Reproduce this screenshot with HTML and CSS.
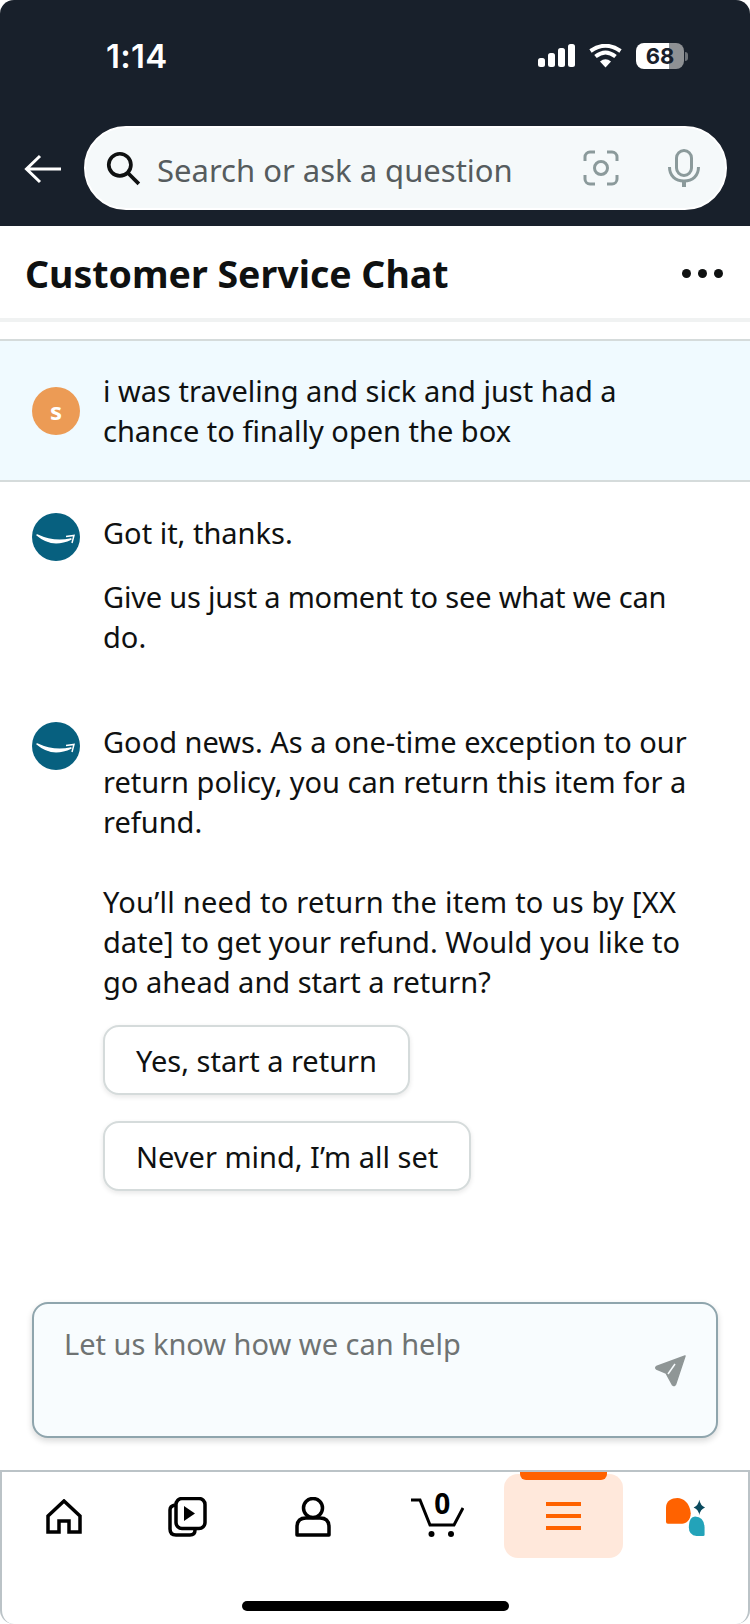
FILE: index.html
```html
<!DOCTYPE html>
<html lang="en">
<head>
<meta charset="utf-8">
<title>Customer Service Chat</title>
<link rel="stylesheet" href="styles.css">
</head>
<body>
<div class="screen">
  <header class="top">
    <div class="status">
      <span class="time">1:14</span>
      <div class="status-icons">
        <svg class="signal" width="37" height="24" viewBox="0 0 37 24"><rect x="0" y="14" width="7" height="9" rx="2.5"/><rect x="10" y="9" width="7" height="14" rx="2.5"/><rect x="20" y="4" width="7" height="19" rx="2.5"/><rect x="30" y="0" width="7" height="23" rx="2.5"/></svg>
        <svg class="wifi" width="33" height="24" viewBox="0 0 33 24"><path d="M16.5 23.5 L11 17.5 Q16.5 13 22 17.5Z" fill="#fff"/><path d="M6.5 12.5 Q16.5 4.5 26.500 12.500" fill="none" stroke="#fff" stroke-width="4"/><path d="M1.500 7 Q16.500 -3.500 31.500 7" fill="none" stroke="#fff" stroke-width="4"/></svg>
        <div class="battery"><div class="battery-body"><span class="battery-num">68</span></div><span class="battery-cap"></span></div>
      </div>
    </div>
    <div class="searchrow">
      <svg class="back" width="38" height="30" viewBox="0 0 38 30"><path d="M37 15H3M16 2 2.500 15 16 28" fill="none" stroke="#fff" stroke-width="3"/></svg>
      <div class="search">
        <svg class="mag" width="38" height="38" viewBox="0 0 36 36"><circle cx="15" cy="15" r="10.500" fill="none" stroke="#0f1111" stroke-width="3.500"/><path d="M22 22 33 33" stroke="#0f1111" stroke-width="3.500"/></svg>
        <span class="search-text">Search or ask a question</span>
        <svg class="lens" width="36" height="36" viewBox="0 0 36 36"><path d="M2 11V7a5 5 0 0 1 5-5h5M24 2h5a5 5 0 0 1 5 5v4M34 25v4a5 5 0 0 1-5 5h-5M12 34H7a5 5 0 0 1-5-5v-4" fill="none" stroke="#8b9a9b" stroke-width="3"/><circle cx="18" cy="18" r="6.500" fill="none" stroke="#8b9a9b" stroke-width="3"/></svg>
        <svg class="mic" width="32" height="38" viewBox="0 0 32 38"><rect x="8.500" y="1.500" width="15" height="25" rx="7.500" fill="none" stroke="#8b9a9b" stroke-width="3"/><path d="M1.500 18c0 9 6 14 14.500 14s14.500-5 14.500-14" fill="none" stroke="#8b9a9b" stroke-width="3"/><path d="M16 31v7" stroke="#8b9a9b" stroke-width="4"/></svg>
      </div>
    </div>
  </header>

  <div class="titlebar">
    <h1 class="title">Customer Service Chat</h1>
    <div class="more"><i></i><i></i><i></i></div>
  </div>

  <section class="msg-user">
    <div class="avatar avatar-s">S</div>
    <p class="text">i was traveling and sick and just had a<br>chance to finally open the box</p>
  </section>

  <section class="msg msg-first">
    <div class="avatar avatar-a"><svg width="48" height="48" viewBox="0 0 48 48"><path d="M5 22Q20 35 39 26Q22 30 5 22Z" fill="#fff" stroke="#fff" stroke-width="1.500" stroke-linejoin="round"/><path d="M34 23.500 42 22.500 40 30" fill="none" stroke="#fff" stroke-width="1.500"/></svg></div>
    <div class="body">
      <p class="text">Got it, thanks.</p>
      <p class="text gap"><span class="tight">Give us just a moment to see what we can</span><br>do.</p>
    </div>
  </section>

  <section class="msg msg-second">
    <div class="avatar avatar-a"><svg width="48" height="48" viewBox="0 0 48 48"><path d="M5 22Q20 35 39 26Q22 30 5 22Z" fill="#fff" stroke="#fff" stroke-width="1.500" stroke-linejoin="round"/><path d="M34 23.500 42 22.500 40 30" fill="none" stroke="#fff" stroke-width="1.500"/></svg></div>
    <div class="body">
      <p class="text">Good news. As a one-time exception to our<br>return policy, you can return this item for a<br>refund.</p>
      <p class="text para"><span class="loose">You’ll need to return the item to us by [XX</span><br>date] to get your refund. Would you like to<br>go ahead and start a return?</p>
      <div class="choices">
        <button class="choice">Yes, start a return</button>
        <button class="choice">Never mind, I’m all set</button>
      </div>
    </div>
  </section>

  <div class="spacer"></div>

  <div class="composer">
    <span class="placeholder">Let us know how we can help</span>
    <svg class="send" width="32" height="32" viewBox="0 0 32 32"><path d="M30 1 1.500 11.500 Q0 12.500 1.500 14 L11 18 L17.500 30 Q19.500 31.500 20.500 29.500 Z" fill="#8f9696" stroke="#8f9696" stroke-width="1.500" stroke-linejoin="round"/><path d="M20 9 13 19" stroke="#f8fcfe" stroke-width="1.500"/></svg>
  </div>

  <nav class="nav">
    <div class="tabs">
      <div class="tab">
        <svg class="icon-low" width="36" height="36" viewBox="0 0 36 36"><path d="M2 33V17L18 2 34 17V33H23V22H13V33Z" fill="none" stroke="#000" stroke-width="3.500"/></svg>
      </div>
      <div class="tab">
        <svg width="40" height="40" viewBox="0 0 40 40"><path d="M7 8Q2 9 2 13V32Q2 38 8 38H22Q27 38 27 33" fill="none" stroke="#000" stroke-width="3.500"/><rect x="8" y="1.500" width="29" height="30" rx="6" fill="#fff" stroke="#000" stroke-width="3.500"/><path d="M16 9 27 16.500 16 24Z" fill="#000"/></svg>
      </div>
      <div class="tab">
        <svg width="36" height="40" viewBox="0 0 36 40"><ellipse cx="18" cy="11" rx="9.500" ry="9.500" fill="none" stroke="#000" stroke-width="3.500"/><path d="M2 38V30Q2 21 11 21H25Q34 21 34 30V38Z" fill="none" stroke="#000" stroke-width="3.500" stroke-linejoin="round"/></svg>
      </div>
      <div class="tab tab-cart">
        <svg width="54" height="43" viewBox="0 0 54 43"><path d="M1 3H10L20 28H44L53 11" fill="none" stroke="#000" stroke-width="3"/><circle cx="21.500" cy="37" r="3"/><circle cx="41" cy="37" r="3"/></svg>
        <span class="cart-count">0</span>
      </div>
      <div class="tab tab-active">
        <span class="active-bar"></span>
        <div class="burger"><i></i><i></i><i></i></div>
      </div>
      <div class="tab">
        <svg width="44" height="40" viewBox="0 0 44 42"><path d="M1 11C1 4 7 1 13 1S26 6 27 17C27 24 22 28 18 28H3Q1 28 1 26Z" fill="#ff6200"/><path d="M25 32Q25 21 31.500 20.500 Q41 21 41.500 32V40Q41.500 41 40 41H33Q25 40 25 32Z" fill="#23a3b9"/><path d="M36 3Q37 9 42 11 37 13 36 19 35 13 30 11 35 9 36 3Z" fill="#0a4a5e"/></svg>
      </div>
    </div>
    <div class="home-row"><span class="home-indicator"></span></div>
  </nav>
</div>
</body>
</html>
```

FILE: styles.css
```css
* { box-sizing: border-box; }
html, body { margin: 0; padding: 0; background: #fff; }
body { font-family: "Noto Sans", "Liberation Sans", sans-serif; color: #0f1111; }
.screen { width: 750px; height: 1624px; display: flex; flex-direction: column; overflow: hidden; }

.top { height: 226px; background: #18202b; border-radius: 14px 14px 0 0; flex: none; }
.status { height: 126px; padding: 40px 62px 0 106px; display: flex; justify-content: space-between; align-items: flex-start; }
.time { color: #fff; font-size: 33px; line-height: 32px; font-weight: 600; font-family: "Inter", "Noto Sans", sans-serif; letter-spacing: 0.3px; }
.status-icons { display: flex; align-items: center; gap: 14px; padding-top: 3px; }
.signal { fill: #fff; }
.battery { display: flex; align-items: center; }
.battery-body { width: 48px; height: 26px; border-radius: 8px; background: linear-gradient(90deg, #fff 0 69%, #8e9194 69% 100%); display: flex; align-items: center; justify-content: center; }
.battery-num { color: #18202b; font-size: 22px; font-weight: 700; line-height: 26px; font-family: "Inter", sans-serif; }
.battery-cap { width: 3px; height: 9px; background: #6d7278; border-radius: 0 3px 3px 0; margin-left: 1px; }

.searchrow { display: flex; align-items: center; padding-left: 24px; padding-right: 23px; gap: 22px; }
.back { flex: none; margin-top: 2px; }
.search { flex: 1; height: 84px; border-radius: 42px; background: #f5f9fa; border: 2px solid #fff; display: flex; align-items: center; padding: 0 25px 0 18px; }
.mag { flex: none; margin-right: 15px; }
.search-text { flex: 1; font-size: 31px; line-height: 40px; color: #565c5e; white-space: nowrap; padding-top: 4px; }
.lens { margin-right: 49px; flex: none; }
.mic { flex: none; }

.titlebar { height: 96px; display: flex; align-items: center; justify-content: space-between; padding: 5px 27px 1px 25px; border-bottom: 4px solid #f0f2f2; flex: none; }
.title { margin: 0; font-size: 37.500px; line-height: 44px; font-weight: 700; color: #0f1111; white-space: nowrap; }
.more { display: flex; gap: 7px; padding-bottom: 2px; }
.more i { width: 9px; height: 9px; border-radius: 50%; background: #0f1111; display: block; }

.msg-user { margin-top: 17px; height: 143px; flex: none; display: flex; align-items: center; gap: 23px; padding-left: 32px; background: #f0faff; border-top: 2px solid #d5dbdb; border-bottom: 2px solid #d5dbdb; }
.avatar { width: 48px; height: 48px; border-radius: 50%; flex: none; display: flex; align-items: center; justify-content: center; }
.avatar-s { background: #ec9b55; color: #fff; font-size: 24px; font-weight: 700; text-transform: lowercase; }
.avatar-a { background: #07607f; overflow: hidden; }
.text { margin: 0; font-size: 29px; line-height: 40px; color: #0f1111; white-space: nowrap; }
.tight { letter-spacing: -0.2px; }
.loose { letter-spacing: 0.25px; }

.msg { display: flex; gap: 23px; padding-left: 32px; flex: none; }
.msg-first { padding-top: 31px; }
.msg-second { padding-top: 65px; }
.gap { margin-top: 24px; }
.para { margin-top: 40px; }

.choices { display: flex; flex-direction: column; align-items: flex-start; gap: 26px; margin-top: 23px; }
.choice { height: 70px; padding: 0 31px; background: #fff; border: 2px solid #d5dbdb; border-radius: 16px; box-shadow: 0 2px 5px rgba(15,17,17,.1); font-family: inherit; font-size: 29px; color: #0f1111; white-space: nowrap; }

.spacer { flex: 1; }

.composer { margin: 0 32px; height: 136px; flex: none; background: #f8fcfe; border: 2px solid #8fa5ad; border-radius: 16px; box-shadow: 0 3px 6px rgba(15,17,17,.16); padding: 20px 29px 0 30px; display: flex; justify-content: space-between; align-items: flex-start; }
.placeholder { font-size: 29px; line-height: 40px; color: #6f7373; }
.send { margin-top: 31px; flex: none; }

.nav { margin-top: 32px; height: 154px; flex: none; border-top: 2px solid #bbc3c7; border-left: 2px solid #bbc3c7; border-right: 2px solid #bbc3c7; border-radius: 0 0 14px 14px; display: flex; flex-direction: column; }
.tabs { display: grid; grid-template-columns: repeat(6, 1fr); height: 129px; padding-top: 2px; }
.tab { height: 84px; display: flex; justify-content: center; padding-top: 23px; position: relative; }
.icon-low { margin-top: 2px; }
.tab-active { margin: 0 1px 0 5px; background: #ffe8db; border-radius: 14px; padding-top: 28px; }
.active-bar { position: absolute; top: -2px; left: 16px; right: 16px; height: 8px; background: #ff6200; border-radius: 0 0 6px 6px; }
.burger { display: flex; flex-direction: column; gap: 8px; width: 35px; }
.burger i { display: block; height: 4px; background: #ff6200; }
.cart-count { position: absolute; top: 11px; left: 0; right: 0; margin-left: 10px; text-align: center; font-size: 28px; line-height: 36px; font-weight: 700; color: #000; }
.home-row { display: flex; justify-content: center; }
.home-indicator { width: 267px; height: 10px; border-radius: 5px; background: #000; }
```
